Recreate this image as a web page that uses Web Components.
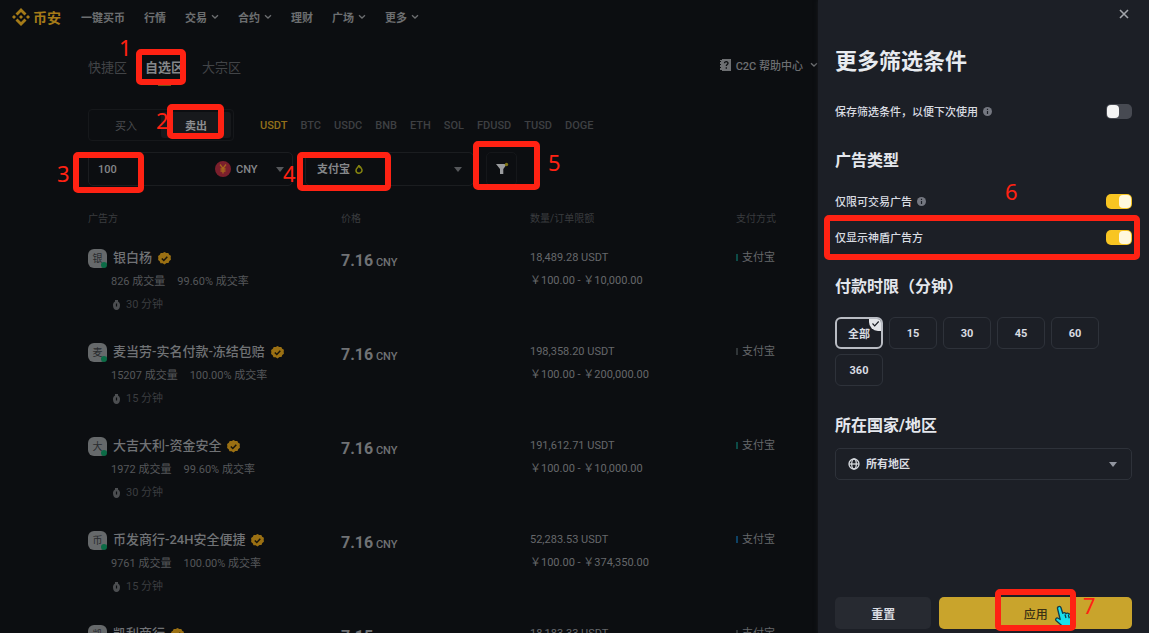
<!DOCTYPE html>
<html lang="zh-CN">
<head>
<meta charset="utf-8">
<title>C2C 交易</title>
<style>
  html, body { height: 100%; }
  body {
    margin: 0;
    background: #0c0e11;
    color: #707275;
    font-family: Roboto, "Noto Sans CJK SC", sans-serif;
    font-size: 11px;
    overflow: hidden;
  }
</style>
</head>
<body>
<c2c-page></c2c-page>

<script>
const reset = `
  :host, * { box-sizing: border-box; }
  button, input, select { font: inherit; color: inherit; background: none; border: 0; padding: 0; margin: 0; border-radius: 0; outline: 0; }
  select { appearance: none; }
  button { cursor: pointer; white-space: nowrap; }
  a { color: inherit; text-decoration: none; }
  svg { display: block; flex: none; }
`

const chevron = `<svg width="8" height="6" viewBox="0 0 8 6" fill="none" stroke="currentColor" stroke-width="1.3"><path d="M1 1.2 4 4l3-2.8"/></svg>`
const caret = `<svg class="caret" width="8" height="5" viewBox="0 0 8 5" fill="currentColor"><path d="M0 0h8L4 5z"/></svg>`

function define(name, html, setup) {
  const template = document.createElement('template')
  template.innerHTML = html
  customElements.define(name, class extends HTMLElement {
    constructor() {
      super()
      this.attachShadow({ mode: 'open' })
    }
    connectedCallback() {
      if (this.shadowRoot.childNodes.length) return
      this.shadowRoot.appendChild(template.content.cloneNode(true))
      if (setup) setup(this, this.shadowRoot)
    }
  })
}

// red frame with a step number, floats over its container
define('step-mark', `
  <style>
    :host { display: contents; }
    div { position: absolute; border: 6px solid #ff2213; border-radius: 5px; box-sizing: border-box; pointer-events: none; z-index: 2; }
    span { position: absolute; color: #ff2213; font: 22px/22px "Noto Sans", sans-serif; z-index: 2; }
  </style>
  <div></div><span></span>
`, (host, root) => {
  const [x, y, w, h] = host.getAttribute('frame').split(' ')
  const [nx, ny] = host.getAttribute('at').split(' ')
  root.querySelector('div').style.cssText = `left:${x}px;top:${y}px;width:${w}px;height:${h}px`
  const num = root.querySelector('span')
  num.style.cssText = `left:${nx}px;top:${ny}px`
  num.textContent = host.getAttribute('step')
})

define('site-nav', `
  <style>
    ${reset}
    :host { display: flex; align-items: center; height: 34px; padding-left: 12px; }
    .brand { display: flex; align-items: center; gap: 3px; width: 69px; color: #a57b18; font-size: 14px; font-weight: 700; }
    nav { display: flex; gap: 19px; font-weight: 700; color: #6c6e70; }
    nav a { display: flex; align-items: center; gap: 4px; white-space: nowrap; }
  </style>
  <a class="brand" href="#">
    <svg width="18" height="18" viewBox="0 0 18 18" fill="currentColor">
      <path d="M9 0 3.500 5.500l2 2L9 4l3.500 3.500 2-2zM9 18l-5.500-5.500 2-2L9 14l3.500-3.500 2 2zM0 9l2-2 2 2-2 2zM14 9l2-2 2 2-2 2zM7 9l2-2 2 2-2 2z"/>
    </svg>币安</a>
  <nav>
    <a href="#">一键买币</a>
    <a href="#">行情</a>
    <a href="#">交易${chevron}</a>
    <a href="#">合约${chevron}</a>
    <a href="#">理财</a>
    <a href="#">广场${chevron}</a>
    <a href="#">更多${chevron}</a>
  </nav>
`)

define('zone-tabs', `
  <style>
    ${reset}
    :host { display: flex; justify-content: space-between; height: 52px; padding-top: 16px; }
    .tabs { display: flex; gap: 18px; font-size: 13px; color: #424447; }
    .tabs button { line-height: 36px; }
    .tabs .on { color: #85878a; font-weight: 700; display: flex; flex-direction: column; align-items: center; height: 36px; }
    .on::after { content: ""; width: 13px; height: 2px; background: #6f5413; flex: none; margin-top: -2px; }
    .help { display: flex; align-items: center; gap: 5px; height: 30px; color: #6d6f72; font-weight: 500; white-space: nowrap; }
    .help svg:last-child { margin-left: 2px; }
  </style>
  <div class="tabs">
    <button>快捷区</button>
    <button class="on">自选区</button>
    <button>大宗区</button>
  </div>
  <a class="help" href="#">
    <svg width="11" height="12" viewBox="0 0 11 12"><path fill="currentColor" d="M0 1h2V0h9v12H2v-1H0V9h1V8H0V6h1V5H0V3h1V2H0z"/><path fill="none" stroke="#0c0e11" stroke-width="1.300" d="M4.500 4.300c0-2.200 3.800-2 3.500 0-.2 1.200-1.700 1.100-1.700 2.700M6.300 8.300v1.400"/></svg>
    C2C 帮助中心 ${chevron}
  </a>
`)

define('trade-bar', `
  <style>
    ${reset}
    :host { display: flex; align-items: center; gap: 26px; margin-top: 23px; }
    .side { display: flex; width: 146px; height: 32px; padding: 2px; border: 1px solid #16181b; border-radius: 4px; color: #4a4c4f; }
    .side button { flex: 1; border-radius: 3px; }
    .side .on { color: #8c8e90; background: #17191c; font-weight: 700; }
    .coins { display: flex; gap: 13px; color: #3e4043; font-weight: 500; }
    .coins .on { color: #93701a; }
  </style>
  <div class="side"><button>买入</button><button class="on">卖出</button></div>
  <div class="coins">
    <button class="on">USDT</button><button>BTC</button><button>USDC</button><button>BNB</button><button>ETH</button><button>SOL</button><button>FDUSD</button><button>TUSD</button><button>DOGE</button>
  </div>
`)

define('filter-bar', `
  <style>
    ${reset}
    :host { display: flex; gap: 12px; margin-top: 11px; height: 34px; font-weight: 500; color: #85878a; }
    .box { display: flex; align-items: center; border: 1px solid #1b1d20; border-radius: 5px; }
    .amount { width: 205px; padding: 0 8px 0 9px; }
    .amount input { flex: 1; min-width: 0; }
    .amount svg:first-of-type { margin-right: 5px; }
    .amount select { margin-right: 18px; }
    .pay { width: 169px; padding: 0 11px; gap: 5px; }
    .pay select { font-weight: 700; }
    .pay svg:last-child { margin-left: auto; }
    .box .caret { color: #55575a; }
    .more { width: 31px; justify-content: center; border-color: #15171a; }
  </style>
  <div class="box amount">
    <input type="text" value="100" aria-label="金额">
    <svg width="16" height="16" viewBox="0 0 16 16"><circle cx="8" cy="8" r="8" fill="#7b1f2c"/><path d="M5 3.500 8 7.500l3-4M8 7.500v5M5.500 8h5M5.500 10h5" fill="none" stroke="#a5651c" stroke-width="1.300"/></svg>
    <select aria-label="货币"><option>CNY</option></select>
    ${caret}
  </div>
  <div class="box pay">
    <select aria-label="支付方式"><option>支付宝</option></select>
    <svg width="8" height="10" viewBox="0 0 8 10" fill="none" stroke="#86850f" stroke-width="1.500"><path d="M4 1C4 3 1 4 1 6.200a3 3 0 0 0 6 0C7 5 6 4.200 5.500 3.200 5 4 4.300 3 4 1z"/></svg>
    ${caret}
  </div>
  <button class="box more" aria-label="筛选">
    <svg width="14" height="14" viewBox="0 0 14 14"><path d="M1 2h11L8.300 7v5H5V7z" fill="#9a9c9e"/><circle cx="11.500" cy="2.500" r="1.700" fill="#807514"/></svg>
  </button>
`)

define('merchant-cell', `
  <style>
    :host { display: grid; grid-template-columns: 19px 1fr; column-gap: 6px; white-space: nowrap; }
    .avatar { position: relative; width: 19px; height: 19px; line-height: 19px; border-radius: 6px; background: #66696b; color: #292b2e; font-size: 10px; text-align: center; align-self: center; }
    .avatar::after { content: ""; position: absolute; right: 0; bottom: 0; width: 6px; height: 6px; border-radius: 50%; background: #0b6b46; }
    .name { display: flex; align-items: center; gap: 6px; line-height: 24px; font-size: 13px; font-weight: 500; color: #707275; }
    .stats, .time { grid-column: 2; display: flex; margin-left: -2px; }
    .stats { line-height: 24px; gap: 12px; color: #55575a; }
    .time { line-height: 22px; gap: 6px; align-items: center; color: #3b3d40; padding-left: 2px; }
  </style>
  <span class="avatar"></span>
  <div class="name"><slot></slot>
    <svg width="13" height="13" viewBox="0 0 13 13"><path fill="#9b7013" d="m6.500 0 1.800 1 2-.1.9 1.800 1.700 1.100-.2 2 .2 2-1.600 1.300-.8 1.900-2 .1-2 1.400-1.900-1.200-2.100-.1-.8-2L.1 8l.2-2.100-.2-2 1.700-1.100.9-1.900 2 .1z"/><path d="m3.800 6.500 2 2 3.500-3.700" fill="none" stroke="#19150b" stroke-width="1.500"/></svg>
  </div>
  <div class="stats"><span class="orders"></span><span class="rate"></span></div>
  <div class="time">
    <svg width="7" height="10" viewBox="0 0 7 10"><path fill="#4c4e51" d="M2 0h3v1.500a4 4 0 0 1 2 3.800c0 3-1.400 4.700-3.500 4.700S0 8.300 0 5.300a4 4 0 0 1 2-3.800z"/><path d="M3.500 3.500v3" stroke="#0c0e11" stroke-width="1.200"/></svg>
    <span class="minutes"></span>
  </div>
`, (host, root) => {
  root.querySelector('.avatar').textContent = host.textContent[0]
  root.querySelector('.orders').textContent = host.getAttribute('orders') + ' 成交量'
  root.querySelector('.rate').textContent = host.getAttribute('rate') + ' 成交率'
  root.querySelector('.minutes').textContent = host.getAttribute('minutes') + ' 分钟'
})

const ads = [
  { name: '银白杨', orders: '826', rate: '99.60%', minutes: 30, price: '7.16', amount: '18,489.28', max: '10,000.00', bar: '#0d4b47' },
  { name: '麦当劳-实名付款-冻结包赔', orders: '15207', rate: '100.00%', minutes: 15, price: '7.16', amount: '198,358.20', max: '200,000.00', bar: '#303538' },
  { name: '大吉大利-资金安全', orders: '1972', rate: '99.60%', minutes: 30, price: '7.16', amount: '191,612.71', max: '10,000.00', bar: '#0d4b47' },
  { name: '币发商行-24H安全便捷', orders: '9761', rate: '100.00%', minutes: 15, price: '7.16', amount: '52,283.53', max: '374,350.00', bar: '#0e4266' },
  { name: '凯利商行', orders: '3120', rate: '99.80%', minutes: 15, price: '7.15', amount: '18,183.33', max: '50,000.00', bar: '#303538' }
]

define('ad-table', `
  <style>
    :host { display: block; margin-top: 14px; }
    table { width: 100%; table-layout: fixed; border-collapse: collapse; }
    th { height: 34px; padding: 0; text-align: left; font-size: 10px; font-weight: 400; color: #3a3c3f; white-space: nowrap; }
    th:nth-child(1) { width: 253px; }
    th:nth-child(2) { width: 189px; }
    th:nth-child(3) { width: 206px; }
    td { padding: 12px 0; vertical-align: top; line-height: 24px; white-space: nowrap; color: #66686b; }
    .price { line-height: 30px; font-weight: 500; color: #707275; }
    .price b { font-size: 16px; font-weight: 700; }
    .limit { line-height: 22px; }
    .bar { display: inline-block; width: 2px; height: 7px; margin-right: 4px; }
  </style>
  <table>
    <thead><tr><th>广告方</th><th>价格</th><th>数量/订单限额</th><th>支付方式</th></tr></thead>
    <tbody></tbody>
  </table>
`, (host, root) => {
  root.querySelector('tbody').innerHTML = ads.map(ad => `
    <tr>
      <td><merchant-cell orders="${ad.orders}" rate="${ad.rate}" minutes="${ad.minutes}">${ad.name}</merchant-cell></td>
      <td class="price"><b>${ad.price}</b> CNY</td>
      <td><div>${ad.amount} USDT</div><div class="limit">￥100.00 - ￥${ad.max}</div></td>
      <td><span class="bar" style="background:${ad.bar}"></span>支付宝</td>
    </tr>`).join('')
})

define('toggle-row', `
  <style>
    ${reset}
    :host { display: flex; align-items: center; justify-content: space-between; height: 36px; }
    label { display: flex; align-items: center; gap: 5px; }
    input { appearance: none; width: 26px; height: 15px; border-radius: 5px; background: #474a52; padding: 1px; display: flex; }
    input::before { content: ""; width: 12px; height: 13px; border-radius: 4px; background: #f5f5f5; }
    input:checked { background: #f8c522; justify-content: flex-end; }
    input:checked::before { background: #fff8dc; }
    svg { display: none; }
    :host([info]) svg { display: block; }
  </style>
  <label for="sw"><slot></slot>
    <svg width="9" height="9" viewBox="0 0 9 9"><circle cx="4.500" cy="4.500" r="4.500" fill="#747780"/><path d="M4.500 1.800v1.200M4.500 4v3" stroke="#1c1f26" stroke-width="1.200"/></svg>
  </label>
  <input id="sw" type="checkbox" role="switch">
`, (host, root) => {
  root.querySelector('input').checked = host.hasAttribute('on')
})

define('time-chips', `
  <style>
    ${reset}
    :host { display: flex; flex-wrap: wrap; gap: 5px 6px; font-weight: 700; }
    label { position: relative; display: grid; place-items: center; width: 48px; height: 32px; border: 1px solid #2e323a; border-radius: 6px; overflow: hidden; }
    input { position: absolute; appearance: none; }
    svg { position: absolute; top: -1px; right: -1px; display: none; }
    label:has(:checked) { border: 2px solid #b9bcc3; }
    :checked ~ svg { display: block; }
  </style>
`, (host, root) => {
  for (const [i, text] of ['全部', '15', '30', '45', '60', '360'].entries()) {
    const label = document.createElement('label')
    label.innerHTML = `<input type="radio" name="limit" ${i == 0 ? 'checked' : ''}><span>${text}</span>
      <svg width="13" height="13" viewBox="0 0 13 13"><path fill="#e3e5e9" d="M0 0h13v13H9a9 9 0 0 1-9-9z"/><path d="m3.500 5.500 2.200 2.300 4-4.300" fill="none" stroke="#1c1f26" stroke-width="1.200"/></svg>`
    root.appendChild(label)
  }
})

define('region-select', `
  <style>
    ${reset}
    :host { display: flex; align-items: center; gap: 6px; height: 32px; padding: 0 14px 0 12px; border: 1px solid #2e323a; border-radius: 5px; font-weight: 700; }
    .caret { color: #9296a0; }
    select { flex: 1; }
  </style>
  <svg width="12" height="12" viewBox="0 0 12 12" fill="none" stroke="#d5d8de" stroke-width="1.300"><circle cx="6" cy="6" r="5"/><ellipse cx="6" cy="6" rx="2.300" ry="5"/><path d="M1 6h10"/></svg>
  <select aria-label="所在国家/地区"><option>所有地区</option></select>
  ${caret}
`)

define('filter-drawer', `
  <style>
    ${reset}
    :host { position: relative; display: flex; flex-direction: column; padding: 0 17px 4px; background: #1c1f26; color: #d9dce2; box-shadow: 0 0 4px #191c21; min-height: 100%; }
    .close { align-self: flex-end; width: 16px; height: 28px; display: grid; place-items: center; color: #a2a5ab; }
    h1 { margin: 14px 0 11px; font-size: 22px; line-height: 40px; font-weight: 700; color: #e8ebf0; }
    h2 { margin: 20px 0 10px; font-size: 16px; line-height: 24px; font-weight: 700; color: #e4e7ed; }
    h2.space { margin: 20px 0 18px; }
    h2.region { margin: 28px 0 10px; }
    toggle-row { font-weight: 500; }
    footer { display: grid; grid-template-columns: 1fr 2fr; gap: 8px; margin-top: auto; font-size: 12px; font-weight: 700; }
    footer button { height: 32px; border-radius: 5px; background: #272a31; }
    footer .apply { position: relative; background: #c9a42c; color: #3a3114; font-weight: 500; }
    .apply svg { position: absolute; left: 114px; top: 7px; z-index: 1; }
  </style>
  <button class="close" aria-label="关闭"><svg width="10" height="10" viewBox="0 0 10 10" stroke="currentColor" stroke-width="1.600"><path d="m1 1 8 8M9 1 1 9"/></svg></button>
  <h1>更多筛选条件</h1>
  <toggle-row info>保存筛选条件，以便下次使用</toggle-row>
  <h2>广告类型</h2>
  <toggle-row info on>仅限可交易广告</toggle-row>
  <toggle-row on>仅显示神盾广告方</toggle-row>
  <h2 class="space">付款时限（分钟）</h2>
  <time-chips></time-chips>
  <h2 class="region">所在国家/地区</h2>
  <region-select></region-select>
  <footer>
    <button>重置</button>
    <button class="apply">应用
      <svg width="24" height="24" viewBox="0 0 24 24" fill="#18e0ee" stroke="#123c48" stroke-width="1.300" stroke-linejoin="round"><path d="M4.500 4.500C4 2.500 7.300 1.500 8 3.800l1.700 5.500c.9-1 2.700-.8 3.200.4.900-.9 2.600-.6 3.100.5 1-.7 2.600-.2 3 1l1.300 4c.7 2.700-.3 5.300-2 7H9.500L3 16.500c-1.200-1.600.6-3.200 2.200-2.200l2 1.200z"/><path d="m12 10.500 1 3.500M15.300 11l1 3.200M18.200 12l.8 2.500" fill="none"/></svg>
    </button>
  </footer>
  <step-mark step="6" frame="6 215 316 45" at="187 180"></step-mark>
  <step-mark step="7" frame="177 589 81 42" at="265 594"></step-mark>
`)

define('c2c-page', `
  <style>
    :host { display: grid; grid-template-columns: minmax(0, 1fr) 331px; height: 100vh; overflow: hidden; }
    main { position: relative; min-width: 0; overflow: hidden; }
    section { padding-left: 88px; }
  </style>
  <main>
    <site-nav></site-nav>
    <section>
      <zone-tabs></zone-tabs>
      <trade-bar></trade-bar>
      <filter-bar></filter-bar>
      <ad-table></ad-table>
    </section>
    <step-mark step="1" frame="136 49 50 36" at="119 36"></step-mark>
    <step-mark step="2" frame="167 104 57 35" at="156 109"></step-mark>
    <step-mark step="3" frame="73 152 71 41" at="57 162"></step-mark>
    <step-mark step="4" frame="297 152 94 39" at="283 162"></step-mark>
    <step-mark step="5" frame="473 141 67 49" at="548 151"></step-mark>
  </main>
  <filter-drawer></filter-drawer>
`)
</script>
</body>
</html>
